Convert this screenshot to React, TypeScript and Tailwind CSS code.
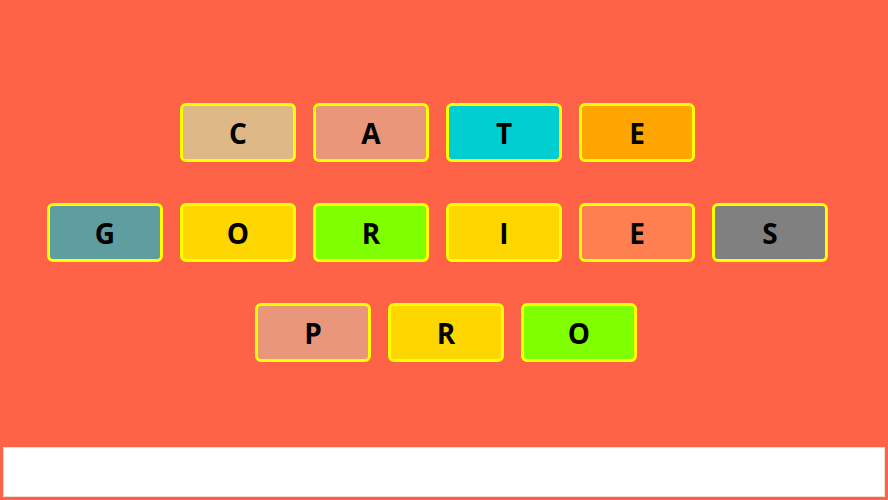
const rows: { letters: [string, string][]; shift: string }[] = [
  {
    letters: [
      ["C", "bg-[#deb887]"],
      ["A", "bg-[#e9967a]"],
      ["T", "bg-[#00ced1]"],
      ["E", "bg-[#ffa500]"],
    ],
    shift: "pr-[13px]",
  },
  {
    letters: [
      ["G", "bg-[#5f9ea0]"],
      ["O", "bg-[#ffd700]"],
      ["R", "bg-[#7fff00]"],
      ["I", "bg-[#ffd700]"],
      ["E", "bg-[#ff7f50]"],
      ["S", "bg-[#808080]"],
    ],
    shift: "pr-[13px]",
  },
  {
    letters: [
      ["P", "bg-[#e9967a]"],
      ["R", "bg-[#ffd700]"],
      ["O", "bg-[#7fff00]"],
    ],
    shift: "pl-[4px]",
  },
];

function Tile({ letter, color }: { letter: string; color: string }) {
  return (
    <div
      className={`w-[116px] h-[59px] flex items-center justify-center rounded-[6px] border-[3px] border-[#ffff00] ${color} text-[28px] font-bold text-black`}
    >
      {letter}
    </div>
  );
}

export default function App() {
  return (
    <div
      className="h-[500px] w-full bg-[#ff6347] flex flex-col"
      style={{ fontFamily: '"Open Sans", "Noto Sans", sans-serif' }}
    >
      {/* letter grid */}
      <div className="flex flex-col gap-[41px] pt-[103px]">
        {rows.map((row, i) => (
          <div key={i} className={`flex justify-center gap-[17px] ${row.shift}`}>
            {row.letters.map(([l, c], j) => (
              <Tile key={j} letter={l} color={c} />
            ))}
          </div>
        ))}
      </div>

      {/* answer input */}
      <input
        type="text"
        className="mt-auto mx-[3px] mb-[3px] h-[50px] bg-white border border-[#f2ddd8] outline-none"
      />
    </div>
  );
}
